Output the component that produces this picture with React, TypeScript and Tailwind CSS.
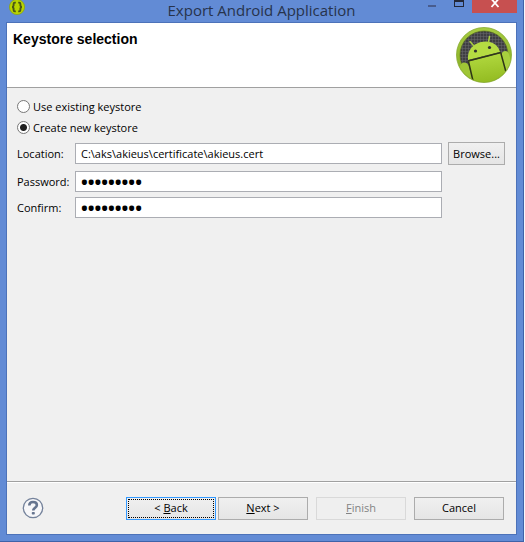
import type { ReactNode } from "react";

function BracesIcon() {
  return (
    <svg width="16" height="16" viewBox="0 0 16 16" aria-hidden="true">
      <circle cx="8" cy="7" r="7.6" fill="#b9d400" stroke="#8aa314" strokeWidth="0.8" />
      <path
        d="M6.8 2.6H5.8Q4.6 2.6 4.6 4V5.6Q4.6 7 3 7Q4.6 7 4.6 8.4V10Q4.6 11.4 5.8 11.4H6.8M9.2 2.6H10.2Q11.4 2.6 11.4 4V5.6Q11.4 7 13 7Q11.4 7 11.4 8.4V10Q11.4 11.4 10.2 11.4H9.2"
        fill="none"
        stroke="#4a5616"
        strokeWidth="1.9"
      />
    </svg>
  );
}

function AndroidLogo() {
  return (
    <svg width="56" height="56" viewBox="0 0 56 56" aria-hidden="true">
      <defs>
        <linearGradient id="rim" x1="0" y1="0" x2="0" y2="1">
          <stop offset="0" stopColor="#a6cc40" />
          <stop offset="1" stopColor="#83a820" />
        </linearGradient>
        <linearGradient id="body" x1="0" y1="0" x2="0.2" y2="1">
          <stop offset="0" stopColor="#b4dc42" />
          <stop offset="1" stopColor="#94bc22" />
        </linearGradient>
        <pattern id="mesh" width="3" height="3" patternUnits="userSpaceOnUse">
          <rect width="3" height="3" fill="#3e3e42" />
          <path d="M0 0H3M0 0V3" stroke="#68686c" strokeWidth="1" />
        </pattern>
        <clipPath id="disc">
          <circle cx="28" cy="28" r="24" />
        </clipPath>
        <clipPath id="outer">
          <circle cx="28" cy="28" r="27" />
        </clipPath>
      </defs>
      <circle cx="28" cy="28" r="27.5" fill="url(#rim)" stroke="#86aa30" strokeWidth="0.8" />
      <circle cx="28" cy="28" r="24" fill="url(#mesh)" stroke="#55661e" strokeWidth="0.6" />
      <g clipPath="url(#outer)">
        <path d="M12.500 34.500L45 26L50 45L56 56H16Z" fill="url(#body)" />
        <path d="M4 40Q4 36.500 7.500 35.500Q11 35 12.500 38L17 54V58H2Z" fill="#9fc636" />
        <path d="M45.500 28Q45.500 24.500 49 24Q52 24 53 27L57 42L50 46Z" fill="#a8d03e" />
        <path d="M12.500 34.500L17 54M44.800 26L50 45" stroke="#2e3616" strokeWidth="1.500" />
      </g>
      <g clipPath="url(#disc)">
        <path d="M12 33C11 23 17 17 25 15C34 13 42 17 44 25Z" fill="#b5dc42" />
        <path d="M17.500 18.500L14 14.500M32.500 15L33.500 9.500" stroke="#a9d040" strokeWidth="1.500" strokeLinecap="round" />
      </g>
      <path d="M12 34L45 25.500" stroke="#303818" strokeWidth="1.400" />
      <circle cx="19.500" cy="24" r="1.600" fill="#303030" />
      <circle cx="33.500" cy="20.500" r="1.600" fill="#303030" />
    </svg>
  );
}

function HelpIcon() {
  return (
    <svg width="22" height="22" viewBox="0 0 22 22" aria-hidden="true">
      <circle cx="11" cy="11" r="9.700" fill="#f7f7f9" stroke="#74829b" strokeWidth="1.300" />
      <path
        d="M7.300 8.600Q7.300 5 11 5Q14.900 5 14.900 8.100Q14.900 9.700 13 10.800Q11.300 11.800 11.300 13.600"
        fill="none"
        stroke="#66758f"
        strokeWidth="2.600"
      />
      <rect x="9.800" y="15" width="3" height="2.600" rx="0.800" fill="#66758f" />
    </svg>
  );
}

function KeystoreOption({ label, checked }: { label: string; checked?: boolean }) {
  return (
    <label className="flex h-[21px] items-center gap-[3px]">
      <input
        type="radio"
        name="keystore"
        defaultChecked={checked}
        className="size-[13px] appearance-none rounded-full border border-[#777777] bg-white checked:bg-[radial-gradient(circle,#202020_0_3px,#ffffff_4px)]"
      />
      {label}
    </label>
  );
}

const fieldClass =
  "h-[21px] min-w-0 flex-1 border border-[#abadb3] bg-white px-[5px] outline-none";

const passwordClass = `${fieldClass} text-[18px] font-bold`;

function Field({ id, label, children }: { id: string; label: string; children: ReactNode }) {
  return (
    <div className="flex items-center">
      <label htmlFor={id} className="w-[58px] shrink-0">
        {label}
      </label>
      {children}
    </div>
  );
}

const buttonClass =
  "h-[23px] w-[90px] border border-[#acacac] bg-linear-to-b from-[#f0f0f0] to-[#e5e5e5]";

export default function App() {
  return (
    <div className="flex min-h-screen bg-[#f4f6fc] pr-px font-['Open_Sans','Noto_Sans',sans-serif] text-[11px] leading-4 text-black">
      <div className="flex flex-1 flex-col border-r border-b border-[#3f62a8] bg-[#628bd5] px-[6px] pb-[6px]">
        <header className="grid h-[22px] grid-cols-[99px_1fr_99px] items-start">
          <div className="pl-[3px]">
            <BracesIcon />
          </div>
          <h1 className="text-center text-[15px] leading-5 text-[#27334c]">Export Android Application</h1>
          <div className="flex justify-end">
            <button aria-label="Minimize" className="flex h-[13px] w-[27px] items-start justify-center pt-[5px]">
              <span className="h-[2px] w-2 bg-[#485c8e]" />
            </button>
            <button aria-label="Maximize" className="flex h-[13px] w-[27px] items-start justify-center">
              <span className="h-[7px] w-[10px] border border-t-2 border-[#222838]" />
            </button>
            <button aria-label="Close" className="flex h-[13px] w-[45px] items-start justify-center bg-[#c75050]">
              <svg width="10" height="8" viewBox="0 0 10 8" aria-hidden="true">
                <path d="M1.500 -1L8.500 7M8.500 -1L1.500 7" stroke="#ffffff" strokeWidth="1.800" />
              </svg>
            </button>
          </div>
        </header>

        <main className="flex flex-1 flex-col border border-[#4c72b9] bg-[#f0f0f0]">
          <div className="flex h-[65px] items-start justify-between border-b border-[#a0a0a0] bg-white pt-1 pr-1 pl-[6px]">
            <h2 className="pt-1 font-['Liberation_Sans',Arial,sans-serif] text-[14px] leading-4 font-bold">
              Keystore selection
            </h2>
            <AndroidLogo />
          </div>

          <form className="flex flex-1 flex-col pt-2 pr-[11px] pl-[10px]">
            <KeystoreOption label="Use existing keystore" />
            <KeystoreOption label="Create new keystore" checked />
            <div className="flex items-center gap-[6px] pt-1">
              <div className="flex-1">
                <Field id="location" label="Location:">
                  <input
                    id="location"
                    type="text"
                    defaultValue="C:\aks\akieus\certificate\akieus.cert"
                    className={fieldClass}
                  />
                </Field>
              </div>
              <button type="button" className="h-[23px] w-[57px] border border-[#acacac] bg-linear-to-b from-[#f0f0f0] to-[#e5e5e5]">
                Browse...
              </button>
            </div>
            <div className="flex flex-col gap-[5px] pt-[6px] pr-[63px]">
              <Field id="password" label="Password:">
                <input id="password" type="password" defaultValue="123456789" className={passwordClass} />
              </Field>
              <Field id="confirm" label="Confirm:">
                <input id="confirm" type="password" defaultValue="123456789" className={passwordClass} />
              </Field>
            </div>
          </form>

          <footer className="flex h-[53px] items-center justify-between border-t border-[#a0a0a0] pr-3 pl-[15px] shadow-[inset_0_1px_0_#ffffff]">
            <button aria-label="Help">
              <HelpIcon />
            </button>
            <div className="flex gap-2">
              <div className="flex gap-[2px]">
                <button className="h-[23px] w-[90px] border border-[#3399ff] bg-linear-to-b from-[#f0f0f0] to-[#e5e5e5] p-px">
                  <span className="flex h-full items-center justify-center border border-dotted border-black">
                    <span>
                      &lt; <u>B</u>ack
                    </span>
                  </span>
                </button>
                <button className={buttonClass}>
                  <u>N</u>ext &gt;
                </button>
              </div>
              <button disabled className="h-[23px] w-[90px] border border-[#d9d9d9] bg-[#efefef] text-[#838383]">
                <u>F</u>inish
              </button>
              <button className={buttonClass}>Cancel</button>
            </div>
          </footer>
        </main>
      </div>
    </div>
  );
}
